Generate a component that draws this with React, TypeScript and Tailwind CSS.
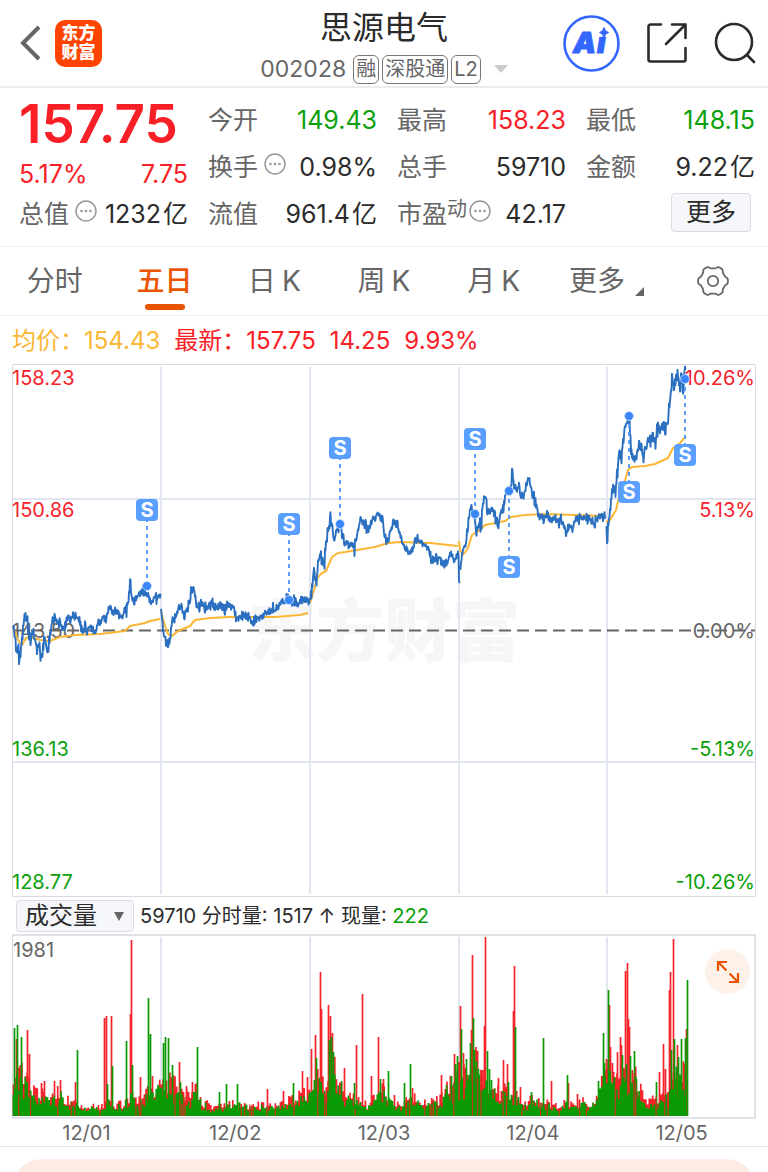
type Point = [number, number];
type Tone = 'r' | 'g';

const RED = '#f5222d';
const GREEN = '#0aa00a';

const toneClass = {
  red: 'text-[#f82026]',
  green: 'text-[#0aa00a]',
  dark: 'text-[#2b2b2b]',
};

// small seeded generator, keeps the intraday noise the same on every render
function createRandom(seed: number) {
  let state = seed;
  return () => {
    state = (state * 1664525 + 1013904223) % 4294967296;
    return state / 4294967296;
  };
}

function valueAt(points: Point[], x: number) {
  const next = points.findIndex((p) => p[0] >= x);
  if (next <= 0) return points[next === 0 ? 0 : points.length - 1][1];
  const [x0, y0] = points[next - 1];
  const [x1, y1] = points[next];
  return y0 + ((y1 - y0) * (x - x0)) / (x1 - x0);
}

function toPath(points: Point[]) {
  return points.map(([x, y], i) => `${i ? 'L' : 'M'}${x.toFixed(1)} ${y.toFixed(1)}`).join('');
}

const priceDays: Point[][] = [
  [[13, 625], [15, 642], [17, 652], [18, 645], [19, 661], [20, 655], [22, 640], [24, 618], [25, 615], [26, 622], [27, 618], [29, 635], [31, 640], [33, 632], [35, 640], [37, 650], [39, 645], [40, 655], [42, 658], [44, 635], [46, 648], [48, 650], [50, 632], [52, 620], [54, 618], [56, 617], [58, 628], [60, 620], [62, 630], [65, 625], [68, 617], [70, 622], [72, 615], [74, 614], [77, 620], [80, 622], [82, 630], [85, 628], [87, 633], [90, 625], [93, 630], [96, 632], [98, 620], [100, 623], [103, 618], [106, 620], [108, 609], [110, 607], [112, 613], [115, 611], [118, 613], [120, 618], [122, 620], [124, 610], [126, 611], [128, 600], [129, 595], [130, 581], [131, 595], [133, 600], [136, 598], [139, 594], [142, 592], [145, 593], [148, 597], [151, 603], [155, 599], [160, 597]],
  [[161, 610], [163, 630], [165, 640], [167, 640], [168, 648], [170, 635], [172, 620], [175, 617], [178, 610], [181, 607], [184, 616], [186, 610], [190, 602], [191, 590], [193, 590], [195, 595], [196, 607], [199, 605], [201, 603], [204, 608], [208, 606], [212, 604], [216, 608], [220, 605], [224, 609], [228, 606], [232, 608], [235, 615], [237, 621], [240, 616], [243, 612], [246, 616], [250, 619], [253, 624], [256, 620], [260, 617], [265, 614], [270, 611], [275, 608], [278, 606], [281, 600], [283, 600], [286, 600], [289, 600], [294, 602], [298, 604], [301, 600], [305, 600], [309, 602]],
  [[310, 600], [311, 595], [313, 575], [314, 570], [316, 588], [318, 562], [320, 556], [322, 560], [324, 565], [325, 550], [327, 535], [329, 525], [330, 515], [332, 530], [334, 541], [336, 530], [338, 526], [340, 525], [342, 535], [345, 542], [349, 545], [352, 543], [354, 549], [357, 535], [360, 519], [363, 525], [365, 522], [367, 531], [370, 525], [373, 518], [375, 522], [377, 514], [380, 518], [382, 519], [384, 530], [386, 542], [388, 540], [391, 530], [394, 524], [397, 524], [400, 535], [403, 545], [406, 548], [409, 554], [412, 549], [415, 540], [418, 539], [422, 544], [425, 545], [428, 550], [431, 556], [434, 560], [437, 561], [440, 560], [444, 566], [447, 561], [450, 556], [455, 556], [458, 555], [459, 580]],
  [[460, 572], [462, 555], [464, 548], [466, 540], [467, 530], [469, 515], [470, 507], [472, 512], [474, 515], [475, 525], [476, 536], [478, 525], [481, 525], [482, 510], [484, 495], [485, 501], [487, 510], [489, 513], [492, 510], [494, 515], [497, 520], [498, 527], [500, 515], [503, 508], [505, 496], [507, 490], [509, 492], [511, 488], [512, 470], [513, 480], [516, 490], [519, 488], [521, 497], [524, 493], [526, 485], [529, 479], [531, 488], [533, 497], [535, 500], [537, 510], [540, 515], [543, 519], [547, 517], [551, 521], [554, 516], [557, 522], [560, 520], [563, 524], [566, 534], [569, 525], [572, 529], [575, 520], [578, 518], [582, 520], [586, 517], [590, 520], [595, 523], [598, 518], [602, 516], [605, 515]],
  [[606, 525], [607, 540], [608, 525], [610, 510], [612, 492], [615, 490], [617, 475], [619, 450], [621, 460], [623, 440], [625, 425], [627, 419], [629, 418], [631, 450], [633, 460], [635, 464], [637, 450], [639, 444], [641, 448], [643, 458], [645, 450], [648, 438], [650, 440], [652, 435], [655, 441], [658, 426], [660, 432], [663, 426], [666, 427], [668, 415], [670, 400], [671, 388], [672, 377], [674, 388], [676, 376], [678, 375], [680, 392], [681, 374], [683, 390], [684, 375], [685, 369]],
];

const averageDays: Point[][] = [
  [[13, 628], [18, 640], [22, 645], [26, 638], [30, 637], [40, 640], [50, 641], [60, 637], [75, 635], [100, 634], [125, 631], [130, 626], [145, 623], [150, 621], [160, 619]],
  [[161, 612], [165, 626], [168, 634], [172, 636], [178, 631], [190, 626], [195, 620], [210, 618], [230, 617], [250, 617], [275, 617], [300, 615], [308, 613]],
  [[310, 603], [314, 590], [318, 577], [322, 573], [326, 571], [332, 557], [338, 553], [345, 552], [357, 550], [375, 547], [388, 543], [400, 542], [430, 543], [458, 546]],
  [[459, 541], [460, 550], [463, 555], [468, 548], [472, 535], [480, 530], [485, 525], [505, 521], [511, 517], [525, 515], [545, 514], [575, 515], [605, 516]],
  [[606, 522], [610, 520], [616, 510], [620, 493], [624, 484], [628, 470], [632, 467], [645, 466], [655, 464], [668, 458], [673, 448], [680, 443], [686, 436]],
];

function buildPricePath() {
  const random = createRandom(7);
  return priceDays
    .map((day) => {
      const points: Point[] = [];
      const last = day[day.length - 1][0];
      for (let x = day[0][0]; x <= last; x += 1) {
        const y = valueAt(day, x);
        const swing = (x < 55 || (x > 465 && x < 500) || x > 610 ? 9 : 7) * (random() < 0.2 ? 2 : 1);
        points.push([x, y + (random() - 0.5) * swing]);
        points.push([x + 0.5, y + (random() - 0.5) * swing]);
      }
      return toPath(points);
    })
    .join('');
}

const pricePath = buildPricePath();
const averagePath = averageDays.map(toPath).join('');

const marks = [
  { x: 147, dot: 586, badge: 510 },
  { x: 289, dot: 600, badge: 524 },
  { x: 340, dot: 524, badge: 448 },
  { x: 475, dot: 514, badge: 439 },
  { x: 509, dot: 491, badge: 567 },
  { x: 629, dot: 416, badge: 492 },
  { x: 685, dot: 379, badge: 455 },
];

const axisLabels = [
  { y: 385, left: '158.23', right: '10.26%', fill: RED },
  { y: 517, left: '150.86', right: '5.13%', fill: RED },
  { y: 638, left: '143.50', right: '0.00%', fill: '#666' },
  { y: 756, left: '136.13', right: '-5.13%', fill: GREEN },
  { y: 889, left: '128.77', right: '-10.26%', fill: GREEN },
];

// typical bar height along the axis
const volumeLevel: Point[] = [
  [13, 46], [20, 44], [28, 48], [31, 28], [42, 24], [52, 22], [60, 28], [64, 16], [74, 18], [82, 10], [102, 10], [106, 18], [114, 14], [124, 13], [131, 28], [136, 13], [148, 26], [160, 34], [172, 36], [180, 24], [190, 20], [196, 28], [202, 16], [212, 9], [235, 15], [246, 13], [258, 12], [275, 11], [290, 18], [300, 24], [310, 28], [316, 50], [325, 34], [334, 50], [342, 26], [354, 18], [368, 11], [380, 30], [390, 18], [400, 12], [412, 20], [422, 13], [436, 18], [448, 30], [460, 46], [468, 40], [474, 60], [482, 42], [492, 36], [500, 26], [514, 26], [522, 12], [535, 20], [544, 14], [556, 11], [565, 18], [574, 12], [584, 16], [590, 9], [600, 30], [608, 56], [616, 38], [626, 52], [636, 40], [644, 16], [654, 20], [660, 18], [668, 24], [674, 54], [680, 46], [688, 56],
];

// [x, top, colour] of the bars that stand out
const volumeSpikes: [number, number, Tone][] = [
  [14, 1028, 'g'], [16, 1039, 'r'], [17, 1025, 'g'], [21, 1037, 'g'], [27, 1030, 'r'], [29, 1054, 'r'], [41, 1083, 'r'], [44, 1081, 'r'], [54, 1081, 'r'], [60, 1080, 'r'], [75, 1082, 'r'], [77, 1050, 'g'],
  [104, 1018, 'r'], [106, 1016, 'r'], [111, 1016, 'r'], [112, 1066, 'g'], [107, 1084, 'g'], [126, 1041, 'g'], [130, 1014, 'r'], [132, 1065, 'g'], [131, 940, 'r'], [140, 1077, 'r'], [148, 998, 'g'], [150, 1034, 'g'], [152, 1076, 'r'],
  [163, 1043, 'g'], [165, 1037, 'g'], [168, 1038, 'g'], [172, 1065, 'g'], [179, 1062, 'r'], [180, 1082, 'g'], [186, 1086, 'r'], [192, 1082, 'r'], [197, 1047, 'g'], [226, 1084, 'g'], [237, 1084, 'g'], [219, 1092, 'g'],
  [267, 1089, 'r'], [283, 1091, 'r'], [293, 1083, 'g'], [302, 1071, 'r'], [307, 1077, 'r'], [311, 1049, 'r'], [315, 1035, 'r'], [316, 1058, 'g'], [320, 972, 'r'], [321, 1009, 'r'], [328, 1005, 'r'], [329, 1040, 'g'], [330, 1016, 'r'], [332, 1033, 'r'], [331, 1037, 'g'], [333, 1052, 'g'], [341, 1081, 'g'], [344, 1068, 'r'], [354, 1083, 'g'], [356, 1045, 'r'], [362, 994, 'r'], [371, 1076, 'r'], [378, 1037, 'r'], [380, 1079, 'g'], [383, 1079, 'r'], [388, 1071, 'g'], [394, 1095, 'r'], [404, 1083, 'g'], [410, 1064, 'g'], [412, 1088, 'r'], [441, 1075, 'r'], [446, 1085, 'g'], [451, 1076, 'g'], [454, 1054, 'r'], [455, 1064, 'g'], [457, 1056, 'g'],
  [460, 1006, 'r'], [461, 1029, 'g'], [463, 1053, 'r'], [466, 1059, 'g'], [470, 1043, 'g'], [471, 1030, 'r'], [472, 955, 'r'], [473, 1018, 'g'], [474, 1050, 'g'], [476, 1061, 'g'], [478, 1069, 'g'], [485, 937, 'r'], [484, 1026, 'r'], [487, 1051, 'g'], [489, 1069, 'g'], [491, 1080, 'g'], [498, 1078, 'r'], [503, 1060, 'r'], [507, 1064, 'r'], [508, 1082, 'g'],
  [513, 1011, 'r'], [514, 966, 'r'], [515, 1027, 'g'], [520, 1087, 'r'], [531, 1092, 'g'], [543, 1038, 'g'], [551, 1081, 'r'], [567, 1075, 'g'], [568, 1083, 'r'], [577, 1094, 'r'], [598, 1081, 'g'], [603, 1033, 'g'], [604, 1063, 'g'], [606, 1059, 'r'],
  [608, 990, 'g'], [609, 1005, 'r'], [610, 1047, 'r'], [612, 1063, 'r'], [614, 1077, 'g'], [617, 1052, 'r'], [620, 1037, 'r'], [621, 1045, 'r'], [622, 1055, 'g'], [625, 971, 'r'], [627, 963, 'r'], [628, 1019, 'r'], [629, 1027, 'r'], [626, 1064, 'g'], [630, 1056, 'g'], [634, 1051, 'g'], [636, 1079, 'g'], [656, 1082, 'g'], [659, 1072, 'r'], [663, 1044, 'r'], [665, 1069, 'r'], [669, 990, 'r'], [670, 972, 'r'], [671, 1050, 'g'], [673, 939, 'r'], [674, 1039, 'g'], [677, 1045, 'r'], [678, 1057, 'g'], [681, 1039, 'g'], [683, 1066, 'r'], [685, 1038, 'g'], [686, 1029, 'r'], [687, 980, 'g'],
];

const BASE = 1116;

function buildVolumePaths() {
  const random = createRandom(21);
  const bar = (x: number, top: number) => `M${(x + 0.5).toFixed(1)} ${BASE}V${top.toFixed(1)}`;
  let redBack = '';
  let green = '';
  let redFront = '';
  for (let x = 13; x <= 686; x += 1.7) {
    const level = valueAt(volumeLevel, x);
    redBack += bar(x, BASE - level * (0.5 + random() * 0.75));
    green += bar(x, BASE - level * (0.35 + random() * 0.65));
    if (random() < 0.14) redFront += bar(x, BASE - level * (0.4 + random() * 0.6));
  }
  volumeSpikes.forEach(([x, top, tone]) => {
    if (tone === 'r') redBack += bar(x, top);
    else green += bar(x, top);
  });
  return { redBack, green, redFront };
}

const volumePaths = buildVolumePaths();
const dayLines = [161, 310, 459, 607];

// six soft lobes around the hub
const gearPath =
  toPath(
    Array.from({ length: 120 }, (_, i): Point => {
      const angle = (i * Math.PI) / 60;
      const radius = 13.8 + 1.2 * Math.tanh(2 * Math.cos(6 * angle));
      return [16 + radius * Math.cos(angle), 15 + radius * Math.sin(angle)];
    }),
  ) + 'Z';

function MoreInfo() {
  return (
    <button type="button" aria-label="说明" className="mb-2 shrink-0 text-[#999]">
      <svg viewBox="0 0 22 22" className="h-[22px] w-[22px]" fill="none" stroke="currentColor" strokeWidth="1.5">
        <circle cx="11" cy="11" r="10" />
        <g fill="currentColor" stroke="none">
          <circle cx="6.5" cy="11" r="1.3" />
          <circle cx="11" cy="11" r="1.3" />
          <circle cx="15.5" cy="11" r="1.3" />
        </g>
      </svg>
    </button>
  );
}

type StatProps = {
  label: string;
  value: string;
  unit?: string;
  tone?: keyof typeof toneClass;
  sup?: string;
  info?: boolean;
};

function Stat({ label, value, unit, tone = 'dark', sup, info }: StatProps) {
  return (
    <div className="flex h-[47px] items-center text-[25px] whitespace-nowrap">
      <span className="text-[#666]">{label}</span>
      {sup && <span className="mb-3 text-[20px] text-[#666]">{sup}</span>}
      {info && <span className={sup ? 'ml-0.5 flex' : 'ml-1.5 flex'}><MoreInfo /></span>}
      <span className={`ml-auto ${toneClass[tone]}`}>
        {value}
        {unit && <span className="ml-0.5">{unit}</span>}
      </span>
    </div>
  );
}

function Header() {
  return (
    <header className="grid h-[88px] grid-cols-[1fr_auto_1fr] items-center border-b-2 border-[#ececec] px-3">
      <div className="flex items-center gap-3.5 pl-2">
        <button type="button" aria-label="返回" className="text-[#666]">
          <svg viewBox="0 0 21 36" className="h-9 w-[21px]" fill="none" stroke="currentColor" strokeWidth="4">
            <path d="M19 2 3 18l16 16" />
          </svg>
        </button>
        <a
          href="#home"
          className="flex h-[47px] w-[47px] flex-col items-center justify-center rounded-[10px] bg-[#ff4400] text-[17px] leading-[19px] font-black text-white"
        >
          <span>东方</span>
          <span>财富</span>
        </a>
      </div>
      <div className="flex flex-col items-center gap-1 pt-1">
        <h1 className="text-[32px] leading-[44px] text-[#2b2b2b]">思源电气</h1>
        <div className="flex h-[30px] items-center gap-[3px] text-[20px] leading-[27px] text-[#666]">
          <span className="mr-1 text-[23px]">002028</span>
          <span className="rounded-md border border-[#777] px-0.5">融</span>
          <span className="rounded-md border border-[#777] px-0.5">深股通</span>
          <span className="rounded-md border border-[#777] px-0.5">L2</span>
          <svg viewBox="0 0 14 8" className="ml-2.5 h-2 w-3.5" fill="#ccc">
            <path d="M0 0h14L7 8z" />
          </svg>
        </div>
      </div>
      <div className="flex items-center justify-end gap-[26px] text-[#2b2b2b]">
        <button type="button" aria-label="Ai">
          <svg viewBox="0 0 57 57" className="h-[57px] w-[57px]">
            <text y="38" fill="#3366ff" stroke="#3366ff" strokeWidth="1" strokeLinejoin="round" className="text-[29px] font-black italic">
              <tspan x="10">A</tspan>
              <tspan x="34">i</tspan>
            </text>
            <path d="M34 10h14v11.500H34z" fill="#fff" />
            <path d="M41 12.500q1 4 4.500 5-3.500 1-4.500 5-1-4-4.500-5 3.500-1 4.500-5z" fill="#3366ff" stroke="#3366ff" strokeLinejoin="round" />
            <circle cx="28.500" cy="28.500" r="27" fill="none" stroke="#3366ff" strokeWidth="2.600" />
          </svg>
        </button>
        <button type="button" aria-label="分享">
          <svg viewBox="0 0 42 42" className="h-[42px] w-[42px]" fill="none" stroke="currentColor" strokeWidth="2.600" strokeLinecap="round" strokeLinejoin="round">
            <path d="M15 2.500H4.500a2 2 0 0 0-2 2v33a2 2 0 0 0 2 2h33a2 2 0 0 0 2-2V26" />
            <path d="M26 2.500h13.500V16M39.500 2.500 20 22" />
          </svg>
        </button>
        <button type="button" aria-label="搜索">
          <svg viewBox="0 0 42 42" className="h-[42px] w-[42px]" fill="none" stroke="currentColor" strokeWidth="2.600" strokeLinecap="round">
            <circle cx="20" cy="20" r="18" />
            <path d="m33 33 7 7" />
          </svg>
        </button>
      </div>
    </header>
  );
}

function Quote() {
  return (
    <section className="grid grid-cols-4 gap-x-5 border-b border-[#eee] pt-[9px] pr-[13px] pb-2 pl-[19px]">
      <div>
        <p className="flex h-[55px] items-center text-[53px] leading-none font-semibold text-[#f82026]">157.75</p>
        <p className="flex h-[39px] items-center justify-between pt-1.5 text-[25px] text-[#f82026]">
          <span>5.17%</span>
          <span>7.75</span>
        </p>
        <Stat label="总值" value="1232" unit="亿" info />
      </div>
      <div>
        <Stat label="今开" value="149.43" tone="green" />
        <Stat label="换手" value="0.98%" info />
        <Stat label="流值" value="961.4" unit="亿" />
      </div>
      <div>
        <Stat label="最高" value="158.23" tone="red" />
        <Stat label="总手" value="59710" />
        <Stat label="市盈" value="42.17" sup="动" info />
      </div>
      <div>
        <Stat label="最低" value="148.15" tone="green" />
        <Stat label="金额" value="9.22" unit="亿" />
        <div className="flex h-[47px] items-center justify-end pr-1 pb-1">
          <button type="button" className="h-[39px] rounded border border-[#d9dce2] bg-[#f6f7fa] px-3.5 text-[25px] leading-none text-[#2b2b2b]">
            更多
          </button>
        </div>
      </div>
    </section>
  );
}

const tabs = [
  { name: '分时' },
  { name: '五日', active: true },
  { name: '日', suffix: 'K' },
  { name: '周', suffix: 'K' },
  { name: '月', suffix: 'K' },
  { name: '更多', menu: true },
];

function Tabs() {
  return (
    <nav className="grid h-[69px] grid-cols-7 border-b border-[#eee]">
      {tabs.map((tab) => (
        <button
          key={tab.name}
          type="button"
          className={`relative flex items-center justify-center gap-1.5 text-[28px] ${
            tab.active ? 'font-medium text-[#ea5504]' : 'text-[#666]'
          } ${tab.menu ? 'pl-1.5' : ''}`}
        >
          {tab.name}
          {tab.suffix && <span>{tab.suffix}</span>}
          {tab.menu && (
            <svg viewBox="0 0 9 9" className="mt-5 ml-1 h-[9px] w-[9px]" fill="currentColor">
              <path d="M9 0v9H0z" />
            </svg>
          )}
          {tab.active && <span className="absolute bottom-[5px] h-1.5 w-10 rounded-full bg-[#ea5504]" />}
        </button>
      ))}
      <button type="button" aria-label="设置" className="flex items-center justify-center text-[#666]">
        <svg viewBox="0 0 32 30" className="h-[30px] w-8" fill="none" stroke="currentColor" strokeWidth="1.800" strokeLinejoin="round">
          <path d={gearPath} />
          <circle cx="16" cy="15" r="5.200" />
        </svg>
      </button>
    </nav>
  );
}

function PriceChart() {
  return (
    <svg viewBox="12 364 744 533" className="block h-auto w-full" role="img" aria-label="五日走势">
      <text x="384" y="656" textAnchor="middle" fill="#f6f6f7" className="text-[68px] font-black">
        东方财富
      </text>
      <g stroke="#e2e6f0" strokeWidth="2" fill="none">
        <path d="M13 499H755M13 762H755" />
        {dayLines.map((x) => (
          <path key={x} d={`M${x} 367V894`} />
        ))}
      </g>
      <path d="M12.500 364.500H755.500V896.500H12.500z" fill="none" stroke="#d8dbe4" />
      <g className="text-[20px]">
        {axisLabels.map((row) => (
          <g key={row.left} fill={row.fill}>
            <text x="12" y={row.y}>{row.left}</text>
            <text x="755" y={row.y} textAnchor="end">{row.right}</text>
          </g>
        ))}
      </g>
      <path d="M13 630.500H755" stroke="#666" strokeWidth="2" strokeDasharray="12 6" />
      <path d={averagePath} fill="none" stroke="#fbb633" strokeWidth="2" strokeLinejoin="round" />
      <path d={pricePath} fill="none" stroke="#2b70c0" strokeWidth="1.900" strokeLinejoin="round" />
      {marks.map(({ x, dot, badge }) => (
        <g key={x}>
          <path d={`M${x} ${dot}V${badge}`} stroke="#5a9fff" strokeWidth="2" strokeDasharray="4 4" />
          <circle cx={x} cy={dot} r="4.500" fill="#3a86f8" stroke="#cfe2ff" strokeWidth=".8" />
          <rect x={x - 11} y={badge - 11} width="22" height="22" rx="4" fill="#5a9fff" />
          <text x={x} y={badge + 7} textAnchor="middle" fill="#fff" className="text-[20px] font-bold">
            S
          </text>
        </g>
      ))}
    </svg>
  );
}

function VolumeChart() {
  return (
    <div className="relative">
      <svg viewBox="12 934 744 185" className="block h-auto w-full" role="img" aria-label="成交量">
        <g stroke="#e2e6f0" strokeWidth="2">
          {dayLines.map((x) => (
            <path key={x} d={`M${x} 937V1116`} />
          ))}
        </g>
        <path d="M12.500 935H755V1118H12.500z" fill="none" stroke="#d8dbe0" strokeWidth="1.500" />
        <text x="13" y="957" fill="#666" className="text-[20px]">1981</text>
        <path d={volumePaths.redBack} stroke="#f5232a" strokeWidth="1.700" />
        <path d={volumePaths.green} stroke="#0a9a05" strokeWidth="1.700" />
        <path d={volumePaths.redFront} stroke="#e0281e" strokeOpacity=".8" strokeWidth="1.300" />
      </svg>
      <button
        type="button"
        aria-label="全屏"
        className="absolute top-[15px] right-1.5 flex h-[45px] w-[45px] items-center justify-center rounded-full bg-[#fdf1e9] text-[#ea5504]"
      >
        <svg viewBox="0 0 24 24" className="h-6 w-6" fill="none" stroke="currentColor" strokeWidth="2.200">
          <path d="M2 11V2h9M2.500 2.500l8 8M22 13v9h-9M21.500 21.500l-8-8" />
        </svg>
      </button>
    </div>
  );
}

export default function App() {
  return (
    <div className="w-full overflow-hidden bg-white font-['Inter','Noto_Sans_CJK_SC',sans-serif]">
      <Header />
      <Quote />
      <Tabs />
      <main className="px-3">
        <div className="flex h-12 items-center gap-3.5 pt-0.5 text-2xl whitespace-nowrap text-[#f82026]">
          <p className="text-[#fbb633]">均价：154.43</p>
          <p>最新：157.75</p>
          <p>14.25</p>
          <p>9.93%</p>
        </div>
        <PriceChart />
        <div className="flex h-[37px] items-center gap-1.5 pl-1 text-[20px] whitespace-nowrap text-[#2b2b2b]">
          <div className="relative">
            <select
              aria-label="指标"
              className="block h-8 w-[118px] appearance-none rounded border border-[#d9dce2] bg-[#f6f7fa] pl-2 text-2xl leading-[30px]"
            >
              <option>成交量</option>
            </select>
            <svg viewBox="0 0 10 9" className="pointer-events-none absolute top-3 right-2.5 h-[9px] w-2.5" fill="#666">
              <path d="M0 0h10L5 9z" />
            </svg>
          </div>
          <p>
            59710 分时量: 1517 ↑ 现量: <span className="text-[#0aa00a]">222</span>
          </p>
        </div>
        <VolumeChart />
        <div className="grid h-[27px] grid-cols-5 items-center text-center text-[20px] leading-none text-[#666]">
          <span>12/01</span>
          <span>12/02</span>
          <span>12/03</span>
          <span>12/04</span>
          <span>12/05</span>
        </div>
      </main>
      <footer className="border-t border-[#e3e3e3] px-3 pt-3">
        <div className="h-[13px] overflow-hidden">
          <div className="h-[60px] rounded-full bg-[#feece4]" />
        </div>
      </footer>
    </div>
  );
}
